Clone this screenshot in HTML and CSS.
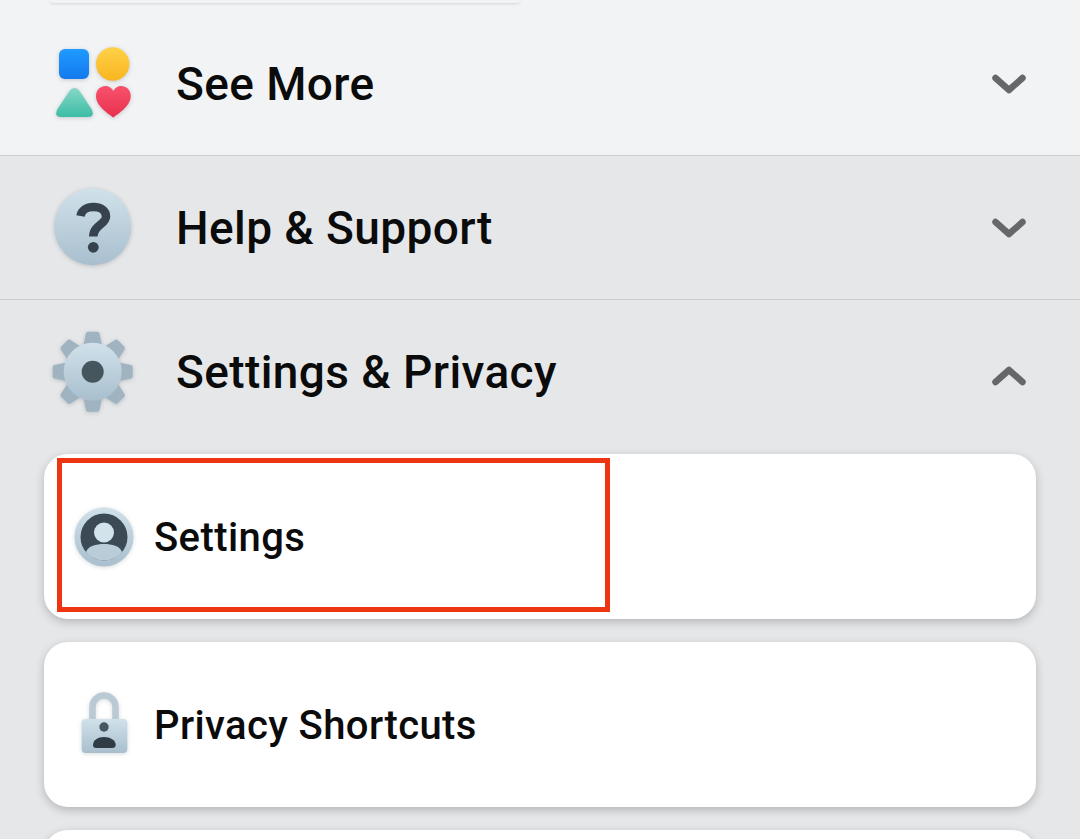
FILE: index.html
```html
<!DOCTYPE html>
<html lang="en">
<head>
    <meta charset="UTF-8">
    <meta name="viewport" content="width=device-width, initial-scale=1.0">
    <title>Menu</title>
    <link rel="stylesheet" href="styles.css">
</head>
<body>
    <svg class="defs" width="0" height="0">
        <defs>
            <linearGradient id="steel" x1="0" y1="0" x2="0" y2="1">
                <stop offset="0" stop-color="#d0e1ea"/>
                <stop offset="1" stop-color="#a9bfce"/>
            </linearGradient>
            <linearGradient id="blue" x1="0" y1="0" x2="0" y2="1">
                <stop offset="0" stop-color="#1f9bff"/>
                <stop offset="1" stop-color="#1479ee"/>
            </linearGradient>
            <linearGradient id="yellow" x1="0" y1="0" x2="0" y2="1">
                <stop offset="0" stop-color="#ffd148"/>
                <stop offset="1" stop-color="#f9b51f"/>
            </linearGradient>
            <linearGradient id="teal" x1="0" y1="0" x2="0" y2="1">
                <stop offset="0" stop-color="#86d8c7"/>
                <stop offset="1" stop-color="#3dbca5"/>
            </linearGradient>
            <linearGradient id="red" x1="0" y1="0" x2="0" y2="1">
                <stop offset="0" stop-color="#f8526c"/>
                <stop offset="1" stop-color="#e8304f"/>
            </linearGradient>
            <path id="tooth" d="M36 1.7 H45.4 Q47 1.7 47.5 3.5 L50.5 18 H30.9 L33.9 3.5 Q34.4 1.7 36 1.7 Z"/>
        </defs>
    </svg>

    <div class="peek"></div>

    <div class="row row-top">
        <svg class="row-icon" viewBox="0 0 84 84">
            <rect x="7" y="7" width="30" height="30" rx="6" fill="url(#blue)"/>
            <circle cx="60.7" cy="22" r="16.7" fill="url(#yellow)"/>
            <path d="M22.5 46 Q25.5 46 27.5 49 L39.5 67 Q43.5 75 35.5 75 L9.5 75 Q1.5 75 5.5 67 L17.5 49 Q19.5 46 22.5 46 Z" fill="url(#teal)"/>
            <path d="M61.3 75.5 C58 72.5 44 65 44 54 C44 47.5 49 44 53.5 44 C57 44 60 46 61.3 49 C62.7 46 65.7 44 69.2 44 C74 44 78.7 47.5 78.7 54 C78.7 65 64.7 72.5 61.3 75.5 Z" fill="url(#red)"/>
        </svg>
        <span class="row-label">See More</span>
        <svg class="chevron" viewBox="0 0 34 20"><path d="M3.5 4 L17 16 L30.5 4"/></svg>
    </div>

    <div class="row">
        <svg class="row-icon" viewBox="0 0 84 84">
            <circle cx="40.7" cy="40.7" r="38.5" fill="url(#steel)"/>
            <path class="qmark" d="M28.5 30 C29.5 24 35 21 41.3 21 C48.5 21 54 24.5 54 30.5 C54 38.5 41.3 39 41.3 50.5"/>
            <circle cx="41.3" cy="61.3" r="5.4" fill="#36434e"/>
        </svg>
        <span class="row-label">Help &amp; Support</span>
        <svg class="chevron" viewBox="0 0 34 20"><path d="M3.5 4 L17 16 L30.5 4"/></svg>
    </div>

    <div class="row row-open">
        <svg class="row-icon" viewBox="0 0 84 84">
            <g fill="#9fb3c1">
                <use href="#tooth"/>
                <use href="#tooth" transform="rotate(45 40.7 41.7)"/>
                <use href="#tooth" transform="rotate(90 40.7 41.7)"/>
                <use href="#tooth" transform="rotate(135 40.7 41.7)"/>
                <use href="#tooth" transform="rotate(180 40.7 41.7)"/>
                <use href="#tooth" transform="rotate(225 40.7 41.7)"/>
                <use href="#tooth" transform="rotate(270 40.7 41.7)"/>
                <use href="#tooth" transform="rotate(315 40.7 41.7)"/>
            </g>
            <circle cx="40.7" cy="41.7" r="29" fill="url(#steel)"/>
            <circle cx="40.7" cy="41.7" r="11" fill="#46565f"/>
        </svg>
        <span class="row-label">Settings &amp; Privacy</span>
        <svg class="chevron chevron-up" viewBox="0 0 34 20"><path d="M3.5 16 L17 4 L30.5 16"/></svg>
    </div>

    <div class="cards">
        <div class="card">
            <svg class="card-icon" viewBox="0 0 60 60">
                <circle cx="30" cy="30" r="29.5" fill="url(#steel)"/>
                <circle cx="30" cy="30" r="23.5" fill="#3b4a55"/>
                <circle cx="30" cy="25.5" r="10" fill="#d3e3ec"/>
                <path d="M12 45 C14 39 22 37 30 37 C38 37 46 39 48 45 C44 50.5 37 53.5 30 53.5 C23 53.5 16 50.5 12 45 Z" fill="#b9ccd8"/>
            </svg>
            <span class="card-label">Settings</span>
            <div class="highlight"></div>
        </div>
        <div class="card">
            <svg class="card-icon" viewBox="0 0 60 70">
                <path class="shackle" d="M18.5 32 V17 a11.5 11.5 0 0 1 23 0 V32"/>
                <rect x="7.7" y="29" width="45.6" height="34" rx="4" fill="url(#steel)"/>
                <circle cx="30" cy="37" r="4.7" fill="#46565f"/>
                <path d="M19 55 C19 50 24 47 30 47 C36 47 41.7 50 41.7 55 Q41.7 58 38 58 H22 Q19 58 19 55 Z" fill="#2f3c46"/>
            </svg>
            <span class="card-label">Privacy Shortcuts</span>
        </div>
        <div class="card"></div>
    </div>
</body>
</html>
```

FILE: styles.css
```css
html, body {
    height: 100%;
    overflow: hidden;
}
body {
    margin: 0;
    background-color: #e6e7e9;
    color: #0b0b0c;
    font-family: Roboto, "Liberation Sans", sans-serif;
}
.defs {
    display: block;
    height: 0;
}
.peek {
    height: 3px;
    margin-bottom: -3px;
    margin-left: 50px;
    position: relative;
    width: 470px;
    background-color: #f2f3f5;
    border-radius: 0 0 6px 6px;
    box-shadow: 0 1px 3px rgba(0, 0, 0, 0.12);
}
.row {
    display: flex;
    align-items: center;
    height: 143px;
    padding-left: 52px;
    padding-right: 54px;
    border-bottom: 1px solid #c9cbcd;
}
.row-top {
    box-sizing: border-box;
    height: 156px;
    padding-top: 12px;
    background-color: #f2f3f5;
}
.row-open {
    height: 144px;
    border-bottom: 0;
}
.row-icon {
    width: 84px;
    height: 84px;
    flex-shrink: 0;
    filter: drop-shadow(0 1px 2px rgba(60, 70, 80, 0.25));
}
.row-label {
    flex: 1;
    margin-left: 40px;
    font-size: 46px;
    font-weight: 500;
    letter-spacing: 0.4px;
    line-height: 52px;
}
.chevron {
    width: 34px;
    height: 20px;
    flex-shrink: 0;
}
.chevron path {
    fill: none;
    stroke: #65676b;
    stroke-width: 6.5;
    stroke-linecap: round;
    stroke-linejoin: round;
}
.chevron-up {
    margin-top: 8px;
}
.qmark {
    fill: none;
    stroke: #36434e;
    stroke-width: 8.5;
}
.shackle {
    fill: none;
    stroke: #b9cad5;
    stroke-width: 6.5;
}
.cards {
    display: flex;
    flex-direction: column;
    gap: 23px;
    box-sizing: border-box;
    height: 395px;
    padding: 10px 44px 0;
    overflow: hidden;
}
.card {
    display: flex;
    align-items: center;
    flex-shrink: 0;
    height: 165px;
    padding-left: 30px;
    background-color: #ffffff;
    border-radius: 24px;
    box-shadow: 0 3px 10px rgba(0, 0, 0, 0.22);
    position: relative;
}
.card-icon {
    width: 60px;
    height: auto;
    flex-shrink: 0;
    filter: drop-shadow(0 1px 2px rgba(60, 70, 80, 0.2));
}
.card-label {
    margin-left: 20px;
    padding-top: 2px;
    font-size: 40px;
    font-weight: 500;
    letter-spacing: 0.4px;
    line-height: 46px;
}
.highlight {
    position: absolute;
    left: 13px;
    top: 4px;
    width: 553px;
    height: 154px;
    box-sizing: border-box;
    border: 5px solid #ee3512;
}
```
